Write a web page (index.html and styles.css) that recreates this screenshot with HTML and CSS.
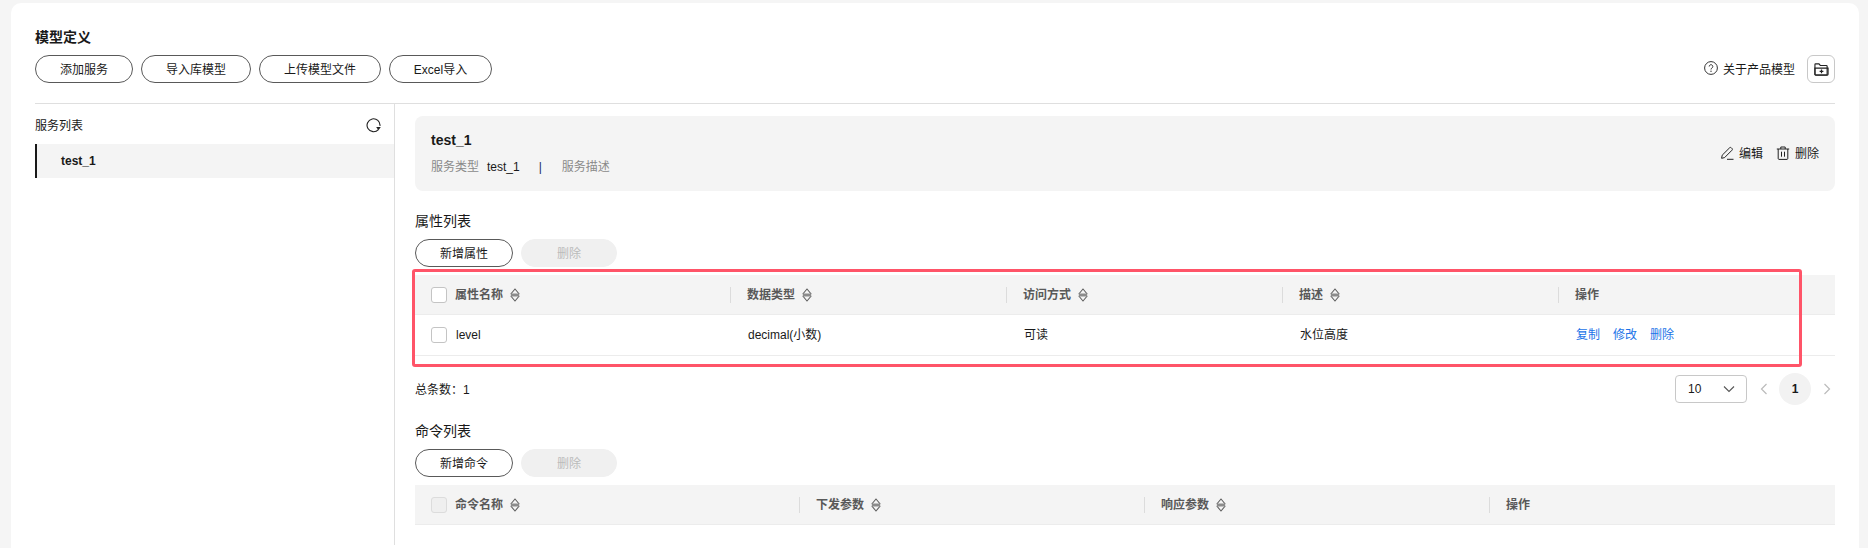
FILE: index.html
```html
<!DOCTYPE html>
<html lang="zh-CN">
<head>
<meta charset="utf-8">
<title>模型定义</title>
<link rel="stylesheet" href="styles.css">
</head>
<body>
<main class="card">
  <h1 class="page-title">模型定义</h1>
  <div class="toolbar">
    <div class="btn-group">
      <button class="btn w-98">添加服务</button>
      <button class="btn w-110">导入库模型</button>
      <button class="btn w-122">上传模型文件</button>
      <button class="btn w-103">Excel导入</button>
    </div>
    <div class="toolbar-right">
      <span class="about">
        <svg class="icon" viewBox="0 0 14 14"><circle cx="7" cy="7" r="6.4" fill="none" stroke="#333" stroke-width="1"/><path d="M5.2 5.5a1.8 1.8 0 1 1 2.8 1.500c-.7.4-1 .8-1 1.500" fill="none" stroke="#333" stroke-width="1"/><circle cx="7" cy="10.300" r=".7" fill="#333"/></svg>
        关于产品模型
      </span>
      <button class="icon-btn">
        <svg class="icon" viewBox="0 0 16 14"><path d="M1 12.500V2.200c0-.4.3-.7.7-.7h3.600l1.400 1.700h6.400c.5 0 .9.4.9.9v8.400c0 .5-.3.9-.8.9H1.800c-.5 0-.8-.4-.8-.9z" fill="none" stroke="#222" stroke-width="1.200"/><path d="M1 6h14v6.600c0 .5-.3.9-.8.9H1.800c-.5 0-.8-.4-.8-.9z" fill="none" stroke="#222" stroke-width="1.200"/><path d="M8 7.600v4M6 9.600h4" stroke="#222" stroke-width="1.300"/></svg>
      </button>
    </div>
  </div>
  <div class="content">
    <aside class="sidebar">
      <div class="side-head">
        <span>服务列表</span>
        <svg class="refresh" viewBox="0 0 16 16"><path d="M13.200 12.300A6.900 6.900 0 1 1 14.900 8.400" fill="none" stroke="#222" stroke-width="1.200"/><path d="M10.800 9.700h5l-2.500 3.300z" fill="#222"/></svg>
      </div>
      <div class="side-item">test_1</div>
    </aside>
    <section class="detail">
      <div class="panel">
        <div class="panel-info">
          <div class="panel-title">test_1</div>
          <div class="panel-meta">
            <span class="muted">服务类型</span>
            <span class="meta-value">test_1</span>
            <span class="meta-sep">|</span>
            <span class="muted">服务描述</span>
          </div>
        </div>
        <div class="panel-actions">
          <span class="action">
            <svg class="icon" viewBox="0 0 14 14"><path d="M2.200 9.200 9.600 1.800c.5-.5 1.200-.5 1.700 0l.7.7c.5.5.5 1.200 0 1.700L4.600 11.600 1.600 12.300z" fill="none" stroke="#222" stroke-width="1"/><path d="M7 13.300h6.500" stroke="#222" stroke-width="1"/></svg>
            编辑
          </span>
          <span class="action">
            <svg class="icon" viewBox="0 0 14 14"><path d="M.8 3h12.400M4.800 3V1h4.400v2M2.200 3v9.500c0 .5.3.9.8.9h8c.5 0 .8-.4.8-.9V3M5.500 5.700v5M8.500 5.700v5" fill="none" stroke="#222" stroke-width="1"/></svg>
            删除
          </span>
        </div>
      </div>

      <h2 class="section-title">属性列表</h2>
      <div class="btn-group">
        <button class="btn w-98">新增属性</button>
        <button class="btn btn-disabled">删除</button>
      </div>
      <div class="table attr-table">
        <div class="row head">
          <div class="cell first"><span class="check"></span>属性名称<svg class="sort" viewBox="0 0 10 14"><path class="sort-line" d="M.8 6 5 1l4.200 5M.8 8 5 13l4.200-5"/><path class="sort-bar" d="M.8 7h8.400"/></svg></div>
          <div class="cell">数据类型<svg class="sort" viewBox="0 0 10 14"><path class="sort-line" d="M.8 6 5 1l4.200 5M.8 8 5 13l4.200-5"/><path class="sort-bar" d="M.8 7h8.400"/></svg></div>
          <div class="cell">访问方式<svg class="sort" viewBox="0 0 10 14"><path class="sort-line" d="M.8 6 5 1l4.200 5M.8 8 5 13l4.200-5"/><path class="sort-bar" d="M.8 7h8.400"/></svg></div>
          <div class="cell">描述<svg class="sort" viewBox="0 0 10 14"><path class="sort-line" d="M.8 6 5 1l4.200 5M.8 8 5 13l4.200-5"/><path class="sort-bar" d="M.8 7h8.400"/></svg></div>
          <div class="cell">操作</div>
        </div>
        <div class="row body">
          <div class="cell first"><span class="check"></span>level</div>
          <div class="cell">decimal(小数)</div>
          <div class="cell">可读</div>
          <div class="cell">水位高度</div>
          <div class="cell links"><a>复制</a><a>修改</a><a>删除</a></div>
        </div>
        <div class="highlight"></div>
      </div>
      <div class="pager-row">
        <span class="total">总条数：1</span>
        <div class="pager">
          <div class="select">10
            <svg class="chev-down" viewBox="0 0 12 8"><path d="M1 1.500 6 6.500 11 1.500" fill="none" stroke="#555" stroke-width="1.100"/></svg>
          </div>
          <svg class="chev chev-prev" viewBox="0 0 8 12"><path d="M6.500 1 1.500 6 6.500 11" fill="none" stroke="#bbb" stroke-width="1.200"/></svg>
          <span class="page">1</span>
          <svg class="chev chev-next" viewBox="0 0 8 12"><path d="M1.500 1 6.500 6 1.500 11" fill="none" stroke="#bbb" stroke-width="1.200"/></svg>
        </div>
      </div>

      <h2 class="section-title cmd-title">命令列表</h2>
      <div class="btn-group">
        <button class="btn w-98">新增命令</button>
        <button class="btn btn-disabled">删除</button>
      </div>
      <div class="table cmd-table">
        <div class="row head">
          <div class="cell first"><span class="check check-off"></span>命令名称<svg class="sort" viewBox="0 0 10 14"><path class="sort-line" d="M.8 6 5 1l4.200 5M.8 8 5 13l4.200-5"/><path class="sort-bar" d="M.8 7h8.400"/></svg></div>
          <div class="cell">下发参数<svg class="sort" viewBox="0 0 10 14"><path class="sort-line" d="M.8 6 5 1l4.200 5M.8 8 5 13l4.200-5"/><path class="sort-bar" d="M.8 7h8.400"/></svg></div>
          <div class="cell">响应参数<svg class="sort" viewBox="0 0 10 14"><path class="sort-line" d="M.8 6 5 1l4.200 5M.8 8 5 13l4.200-5"/><path class="sort-bar" d="M.8 7h8.400"/></svg></div>
          <div class="cell">操作</div>
        </div>
      </div>
    </section>
  </div>
</main>
</body>
</html>
```
FILE: styles.css
```css
* { box-sizing: border-box; }
html, body { margin: 0; height: 100%; }
body {
  background: #f5f5f5;
  font-family: "Liberation Sans", "Noto Sans CJK SC", sans-serif;
  font-size: 12px;
  color: #191919;
  overflow: hidden;
  padding: 3px 9px 0 11px;
}
.card {
  background: #fff;
  border-radius: 10px 10px 0 0;
  height: 545px;
  padding: 0 24px;
}
.page-title {
  margin: 0;
  padding-top: 24px;
  font-size: 14px;
  line-height: 20px;
  font-weight: 700;
  height: 52px;
}
.toolbar {
  display: flex;
  justify-content: space-between;
  height: 49px;
  border-bottom: 1px solid #dfdfdf;
}
.btn-group { display: flex; gap: 8px; height: 28px; }
.btn {
  height: 28px;
  padding: 0 0 2px;
  background: #fff;
  border: 1px solid #595959;
  border-radius: 14px;
  font: inherit;
  color: #191919;
}
.w-98 { width: 98px; }
.w-110 { width: 110px; }
.w-122 { width: 122px; }
.w-103 { width: 103px; }
.btn-disabled {
  width: 96px;
  background: #f0f0f0;
  border-color: #f0f0f0;
  color: #bbb;
}
.toolbar-right { display: flex; align-items: flex-start; gap: 12px; }
.about { display: flex; align-items: center; gap: 5px; height: 28px; padding-bottom: 2px; }
.icon { width: 14px; height: 14px; display: block; }
.icon-btn {
  width: 28px;
  height: 28px;
  padding: 0;
  display: flex;
  align-items: center;
  justify-content: center;
  background: #fff;
  border: 1px solid #c8c8c8;
  border-radius: 6px;
}
.icon-btn .icon { width: 15px; }
.content { display: flex; height: 441px; }
.sidebar { width: 360px; flex: none; border-right: 1px solid #dfdfdf; }
.side-head {
  display: flex;
  justify-content: space-between;
  align-items: center;
  height: 40px;
  padding: 0 13px 0 0;
}
.refresh { width: 15px; height: 15px; margin-top: 3px; }
.side-item {
  height: 34px;
  line-height: 34px;
  background: #f4f4f4;
  border-left: 2px solid #191919;
  padding-left: 24px;
  font-weight: 700;
}
.detail { flex: 1; min-width: 0; padding: 12px 0 0 20px; }
.panel {
  height: 75px;
  background: #f4f4f4;
  border-radius: 8px;
  padding: 14px 16px;
  display: flex;
  justify-content: space-between;
  align-items: center;
}
.panel-info { align-self: flex-start; }
.panel-title { font-size: 14px; font-weight: 700; line-height: 20px; }
.panel-meta { display: flex; line-height: 18px; margin-top: 8px; }
.panel-actions { display: flex; gap: 13px; margin-bottom: 2px; }
.muted { color: #8a8a8a; }
.meta-value { margin-left: 8px; }
.meta-sep { margin: 0 20px 0 19px; color: #1a2a6a; }
.action { display: flex; align-items: center; gap: 5px; }
.section-title {
  margin: 21px 0 9px;
  font-size: 14px;
  font-weight: 400;
  line-height: 18px;
}
.cmd-title { margin-top: 17px; }
.table { position: relative; margin-top: 8px; }
.row { display: grid; align-items: center; }
.attr-table .row { grid-template-columns: 315px 276px 276px 276px 277px; }
.cmd-table .row { grid-template-columns: 384px 345px 345px 346px; }
.row.head { height: 40px; background: #f4f4f4; border-bottom: 1px solid #ececec; color: #595959; font-weight: 700; }
.row.body { height: 41px; border-bottom: 1px solid #ececec; }
.cell { display: flex; align-items: center; padding-left: 18px; height: 16px; line-height: 16px; }
.row.head .cell { border-left: 1px solid #dcdcdc; padding-left: 16px; }
.row.head .cell.first { border-left: 0; padding-left: 16px; }
.cell.first { padding-left: 16px; }
.check {
  width: 16px;
  height: 16px;
  border: 1px solid #c4c4c4;
  border-radius: 3px;
  background: #fff;
  margin-right: 8px;
}
.row.body .check { margin-right: 9px; }
.check-off { background: #efefef; border-color: #dcdcdc; }
.sort { width: 10px; height: 14px; margin-left: 7px; flex: none; }
.sort-line { fill: none; stroke: #5f5f5f; stroke-width: 1.100; }
.sort-bar { fill: none; stroke: #8c8c8c; stroke-width: 3; }
.links { gap: 13px; color: #1a73e8; }
.highlight {
  position: absolute;
  left: -3px;
  top: -6px;
  width: 1390px;
  height: 98px;
  border: 3px solid #ff5468;
  border-radius: 3px;
  pointer-events: none;
}
.pager-row {
  display: flex;
  justify-content: space-between;
  align-items: center;
  height: 32px;
  margin-top: 17px;
}
.total { margin-bottom: 2px; }
.pager { display: flex; align-items: center; }
.select {
  width: 72px;
  height: 28px;
  border: 1px solid #c8c8c8;
  border-radius: 4px;
  padding: 0 11px 0 12px;
  display: flex;
  align-items: center;
  justify-content: space-between;
}
.chev-down { width: 12px; height: 8px; }
.chev { width: 8px; height: 12px; }
.chev-prev { margin: 0 11px 0 13px; }
.chev-next { margin: 0 4px 0 12px; }
.page {
  width: 32px;
  height: 32px;
  border-radius: 50%;
  background: #f2f2f2;
  font-weight: 700;
  display: flex;
  align-items: center;
  justify-content: center;
}
```
